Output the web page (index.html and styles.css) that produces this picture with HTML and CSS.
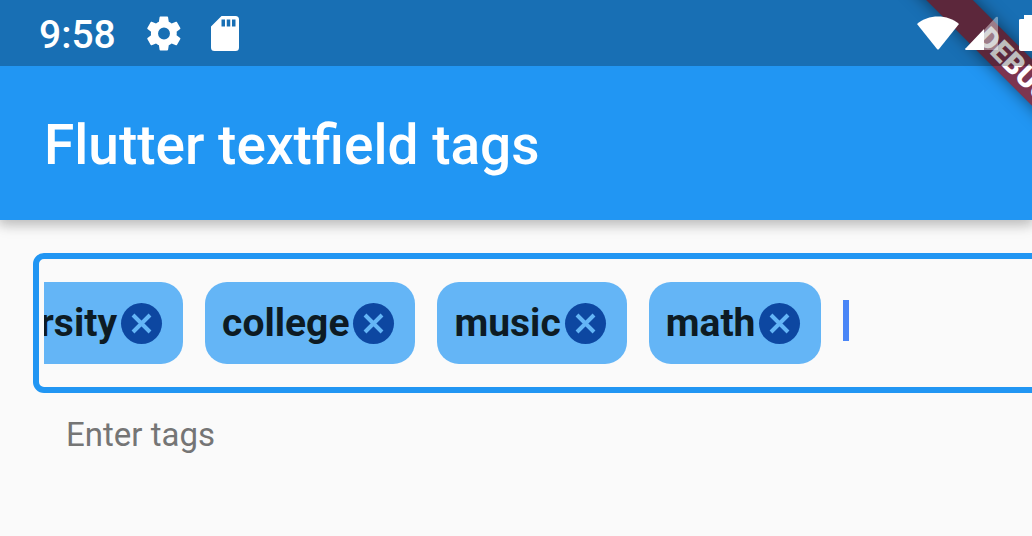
FILE: index.html
```html
<!DOCTYPE html>
<html lang="en">
<head>
    <meta charset="UTF-8">
    <meta name="viewport" content="width=device-width, initial-scale=1.0">
    <title>Flutter textfield tags</title>
    <link rel="stylesheet" href="styles.css">
</head>
<body>
    <header class="top">
        <div class="app-bar">
            <h1 class="title">Flutter textfield tags</h1>
        </div>
        <div class="banner">DEBUG</div>
        <div class="status-bar">
            <span class="time">9:58</span>
            <svg class="icon-gear" viewBox="2 2 20 20">
                <path fill-rule="evenodd" d="M19.4 13c0-.3.1-.6.1-1s0-.7-.1-1l2.1-1.600c.2-.2.2-.4.1-.6l-2-3.500c-.1-.2-.4-.3-.6-.2l-2.500 1c-.5-.4-1.100-.7-1.700-1l-.4-2.600c0-.3-.2-.5-.5-.5h-4c-.2 0-.5.2-.5.4l-.4 2.700c-.6.2-1.100.6-1.700 1l-2.500-1c-.2-.1-.5 0-.6.2l-2 3.500c-.1.2-.1.500.1.600l2.100 1.600c0 .3-.1.700-.1 1s0 .7.1 1l-2.100 1.600c-.2.2-.2.400-.1.600l2 3.500c.1.2.4.3.6.2l2.500-1c.5.4 1.100.7 1.700 1l.4 2.700c0 .2.2.4.5.4h4c.2 0 .5-.2.5-.4l.4-2.700c.6-.2 1.100-.6 1.700-1l2.500 1c.2.1.5 0 .6-.2l2-3.500c.1-.2.1-.5-.1-.600zM12 15.500a3.500 3.500 0 1 1 0-7a3.500 3.500 0 0 1 0 7z"/>
            </svg>
            <svg class="icon-card" viewBox="4 2 16 20">
                <path fill-rule="evenodd" d="M18 2h-8L4 8v12a2 2 0 0 0 2 2h12a2 2 0 0 0 2-2V4a2 2 0 0 0-2-2zM10 4h2v4h-2zM13 4h2v4h-2zM16 4h2v4h-2z"/>
            </svg>
            <svg class="icon-wifi" viewBox="0 0 42 34">
                <path d="M0 8C11-2 31-2 42 8L22 33q-1 1-2 0z"/>
            </svg>
            <svg class="icon-signal" viewBox="0 0 34 34">
                <path opacity=".4" d="M19 14L31 1q2-1 2 1v32H19z"/>
                <path d="M19 13v21H1q-2-1 0-2z"/>
            </svg>
            <svg class="icon-battery" viewBox="0 0 13 36">
                <path d="M5 0h8v36H2q-2 0-2-2V5q0-1 2-1h3z"/>
            </svg>
        </div>
    </header>

    <main class="content">
        <div class="field">
            <div class="tags">
                <span class="tag">university
                    <button type="button" class="remove" aria-label="Remove university">
                        <svg viewBox="0 0 41 41"><path d="M12 12L29 29M29 12L12 29"/></svg>
                    </button>
                </span>
                <span class="tag">college
                    <button type="button" class="remove" aria-label="Remove college">
                        <svg viewBox="0 0 41 41"><path d="M12 12L29 29M29 12L12 29"/></svg>
                    </button>
                </span>
                <span class="tag">music
                    <button type="button" class="remove" aria-label="Remove music">
                        <svg viewBox="0 0 41 41"><path d="M12 12L29 29M29 12L12 29"/></svg>
                    </button>
                </span>
                <span class="tag">math
                    <button type="button" class="remove" aria-label="Remove math">
                        <svg viewBox="0 0 41 41"><path d="M12 12L29 29M29 12L12 29"/></svg>
                    </button>
                </span>
                <span class="caret"></span>
                <input type="text" id="tag-input" class="tag-input">
            </div>
        </div>
        <label for="tag-input" class="helper">Enter tags</label>
    </main>
</body>
</html>
```

FILE: styles.css
```css
* {
    box-sizing: border-box;
}

body {
    margin: 0;
    background: #fafafa;
    font-family: Roboto, "Liberation Sans", sans-serif;
    overflow: hidden;
}

/* header */
.top {
    position: relative;
    z-index: 1;
    background: #2196f3;
    box-shadow: 0 3px 10px 2px rgba(0, 0, 0, .16), 0 6px 14px rgba(0, 0, 0, .1);
}

.app-bar {
    padding: 111px 44px 41px;
}

.title {
    margin: 0;
    color: #fff;
    font-size: 55px;
    font-weight: 500;
    line-height: 68px;
}

.banner {
    position: absolute;
    top: 49px;
    right: -133px;
    width: 300px;
    height: 33px;
    background: #7d3550;
    box-shadow: 0 0 16px rgba(0, 0, 0, .5);
    color: #fff;
    font-size: 29px;
    font-weight: 900;
    line-height: 33px;
    text-align: center;
    transform: rotate(45deg);
}

/* the status bar darkens everything under it */
.status-bar {
    position: absolute;
    top: 0;
    left: 0;
    width: 100%;
    height: 66px;
    padding-left: 39px;
    display: flex;
    align-items: center;
    background: rgba(0, 0, 0, .26);
}

.status-bar svg {
    fill: #fff;
    flex: none;
}

.time {
    padding-top: 3px;
    color: #fff;
    font-size: 39px;
    font-weight: 500;
}

.icon-gear {
    width: 34px;
    height: 35px;
    margin-left: 31px;
}

.icon-card {
    width: 28px;
    height: 35px;
    margin-left: 30px;
}

.icon-wifi {
    width: 42px;
    height: 34px;
    margin-left: auto;
}

.icon-signal {
    width: 34px;
    height: 34px;
    margin: 0 20px 0 6px;
}

.icon-battery {
    width: 13px;
    height: 36px;
}

/* tag field */
.content {
    padding: 33px 0 0 33px;
}

.field {
    margin-right: -15px;
    padding: 23px 5px;
    border: 6px solid #2196f3;
    border-radius: 11px;
}

.tags {
    display: flex;
    align-items: center;
    gap: 22px;
    overflow: hidden;
}

.tag {
    display: flex;
    flex: none;
    align-items: center;
    gap: 4px;
    height: 82px;
    padding: 0 21px 0 17px;
    border-radius: 22px;
    background: #64b5f6;
    color: #0d1b24;
    font-size: 39px;
    font-weight: 700;
}

/* scrolled to the end of the list */
.tag:first-child {
    margin-left: -116px;
}

.remove {
    width: 41px;
    height: 41px;
    padding: 0;
    border: 0;
    border-radius: 50%;
    background: #0d47a1;
}

.remove svg {
    display: block;
    width: 41px;
    height: 41px;
    fill: none;
    stroke: #64b5f6;
    stroke-width: 4;
}

.caret {
    flex: none;
    width: 6px;
    height: 41px;
    margin-bottom: 6px;
    background: #4a86f7;
}

.tag-input {
    flex: 1;
    min-width: 0;
    padding: 0;
    border: 0;
    outline: 0;
    background: none;
    font: 38px Roboto, sans-serif;
}

.helper {
    display: block;
    padding: 22px 33px;
    color: #757575;
    font-size: 33px;
    line-height: 39px;
}
```
